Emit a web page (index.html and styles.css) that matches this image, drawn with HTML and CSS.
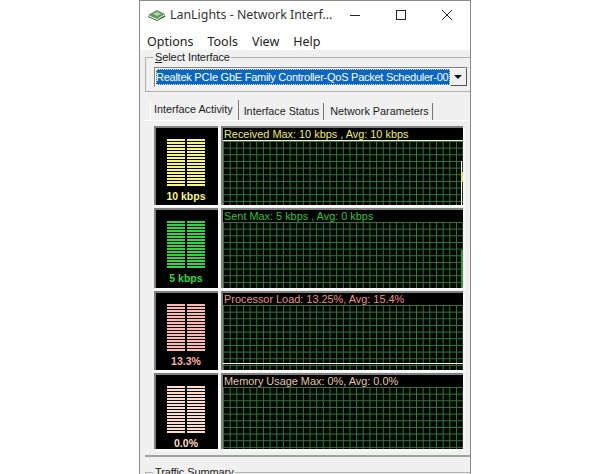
FILE: index.html
```html
<!DOCTYPE html>
<html lang="en">
<head>
<meta charset="utf-8">
<title>LanLights</title>
<link rel="stylesheet" href="styles.css">
</head>
<body>
<div class="window">
  <header class="titlebar">
    <svg class="app-icon" width="18" height="12" viewBox="0 0 18 12"><path d="M0 6 9 1l8 4-8 5z" fill="#5f9a5a"/><path d="M0 7l9 4 8-5v2l-8 4-9-4z" fill="#38663a"/><path d="M5 5l4-2 4 2-4 2z" fill="#b9d6b0"/></svg>
    <span class="title">LanLights - Network Interf...</span>
    <div class="controls">
      <svg width="12" height="12" viewBox="0 0 12 12"><path d="M1 6.5h10" stroke="#222" fill="none"/></svg>
      <svg width="12" height="12" viewBox="0 0 12 12"><rect x="1.5" y="1.5" width="9" height="9" stroke="#222" fill="none"/></svg>
      <svg width="12" height="12" viewBox="0 0 12 12"><path d="M1 1l10 10M11 1 1 11" stroke="#222" fill="none"/></svg>
    </div>
  </header>
  <nav class="menu"><span>Options</span><span>Tools</span><span>View</span><span>Help</span></nav>
  <main class="client">
    <fieldset class="group select-group">
      <legend><u>S</u>elect Interface</legend>
      <div class="combo">
        <span class="combo-text"><span class="selected">Realtek PCIe GbE Family Controller-QoS Packet Scheduler-00</span></span>
        <span class="combo-btn"></span>
      </div>
    </fieldset>
    <div class="tabs">
      <span class="tab active">Interface Activity</span>
      <span class="tab">Interface Status</span>
      <span class="tab">Network Parameters</span>
    </div>
    <section class="panel">
      <div class="row c-yellow">
        <div class="meter"><div class="bars"><i></i><i></i></div><b>10 kbps</b></div>
        <div class="graph"><div class="cap">Received Max: 10 kbps , Avg: 10 kbps</div><div class="plot"><span class="trace-y"></span></div></div>
      </div>
      <div class="row c-green">
        <div class="meter"><div class="bars"><i></i><i></i></div><b>5 kbps</b></div>
        <div class="graph"><div class="cap">Sent Max: 5 kbps , Avg: 0 kbps</div><div class="plot"><span class="trace-g"></span></div></div>
      </div>
      <div class="row c-red">
        <div class="meter"><div class="bars"><i></i><i></i></div><b>13.3%</b></div>
        <div class="graph"><div class="cap">Processor Load: 13.25%, Avg: 15.4%</div><div class="plot"><span class="line-w"></span></div></div>
      </div>
      <div class="row c-peach">
        <div class="meter"><div class="bars"><i></i><i></i></div><b>0.0%</b></div>
        <div class="graph"><div class="cap">Memory Usage Max: 0%, Avg: 0.0%</div><div class="plot"></div></div>
      </div>
    </section>
    <fieldset class="group traffic"><legend>Traffic Summary</legend></fieldset>
  </main>
</div>
</body>
</html>
```
FILE: styles.css
```css
html, body { margin: 0; padding: 0; background: #fff; height: 474px; overflow: hidden; }
body { font-family: "Liberation Sans", Arial, sans-serif; color: #111; }
.window {
  width: 332px; height: 474px; margin-left: 139px; box-sizing: border-box;
  border-left: 1px solid #8a8a8a; border-right: 1px solid #8a8a8a; border-top: 1px solid #8a8a8a;
  background: #fff; display: flex; flex-direction: column; overflow: hidden;
}
.titlebar { height: 27px; display: flex; align-items: center; padding-left: 8px; flex: none; }
.app-icon { flex: none; margin-right: 4px; }
.title { font-family: "Noto Sans", sans-serif; font-size: 12.4px; color: #333; white-space: nowrap; }
.controls { margin-left: auto; display: flex; gap: 34px; padding-right: 17px; }
.menu { height: 22px; box-sizing: border-box; padding: 4px 0 0 7px; display: flex; gap: 14px; align-items: center; flex: none; font-family: "Noto Sans", sans-serif; font-size: 12.5px; color: #222; }
.client { flex: 1; background: #f0f0f0; padding: 2px 0 0 5px; min-height: 0; overflow: hidden; }
.group { border: 1px solid #b0b0b0; margin: 0; padding: 0; min-width: 0; }
legend { font-size: 11px; letter-spacing: -0.1px; padding: 0 1px 0 2px; margin-left: 7px; line-height: 11px; color: #222; }
.select-group legend { margin-left: -1px; }
.select-group { height: 40px; width: 340px; box-sizing: border-box; padding: 4px 0 0 8px; }
.combo { display: flex; width: 314px; height: 20px; box-sizing: border-box; border: 1px solid; border-color: #808080 #eee #eee #808080; background: #fff; }
.combo-text { flex: 1; padding: 1px 0 0 1px; overflow: hidden; white-space: nowrap; min-width: 0; }
.selected { display: block; background: #0a66c2; color: #fff; font-size: 11px; letter-spacing: -0.25px; line-height: 16px; outline: 1px dotted #cfe0f0; outline-offset: -1px; }
.combo-btn { width: 17px; flex: none; background: #f0f0f0; border: 1px solid; border-color: #fff #555 #555 #fff; box-sizing: border-box; position: relative; }
.combo-btn::after { content: ""; position: absolute; left: 3px; top: 6px; border: 4px solid transparent; border-top: 4px solid #111; border-bottom: 0; }
.tabs { display: flex; align-items: flex-end; height: 22px; margin-top: 6px; padding-left: 5px; font-size: 10.8px; color: #222; }
.tab { padding: 0 4px 0 5px; height: 17px; line-height: 17px; border-right: 1px solid #777; white-space: nowrap; box-sizing: border-box; }
.tab:last-child { padding: 0 3px 0 6px; }
.tab.active { height: 20px; line-height: 18px; padding: 0 5px 0 3px; border-left: 1px solid #fff; }
.panel { width: 326px; padding: 5px 0 0 9px; box-sizing: border-box; height: 337px; border-top: 1px solid #fff; border-bottom: 2px solid #a0a0a0; display: grid; grid-template-rows: 79px 80px 79px 76px; row-gap: 3px; align-content: start; }
.row { display: flex; gap: 3px; min-height: 0; }
.meter { width: 64px; background: #000; border-top: 2px solid #808080; border-left: 2px solid #808080; box-shadow: 2px 2px 0 #fbfbfb; box-sizing: border-box; display: flex; flex-direction: column; align-items: center; padding: 11px 2px 0 0; overflow: hidden; }
.meter b { font-size: 10.5px; line-height: 13px; font-weight: bold; margin-top: 4px; color: var(--text); white-space: nowrap; }
.bars { display: flex; gap: 2px; height: 47px; flex: none; }
.bars i { display: block; width: 18px; height: 47px; background: repeating-linear-gradient(to bottom, var(--c) 0 2px, #000 2px 3px); }
.graph { width: 242px; background: #000; border-top: 2px solid #808080; border-left: 2px solid #808080; box-shadow: 2px 2px 0 #fbfbfb; box-sizing: border-box; display: flex; flex-direction: column; overflow: hidden; }
.cap { height: 12px; font-size: 10.9px; line-height: 12px; padding-left: 1px; color: var(--cap); white-space: nowrap; flex: none; }
.plot { flex: 1; position: relative; background-color: #030803;
  background-image: linear-gradient(to right, #37763c 1.3px, transparent 1.3px), linear-gradient(to bottom, #37763c 1.3px, transparent 1.3px);
  background-size: 6.67px 6.67px; }
.c-yellow { --c: #f6f47c; --text: #f8f888; --cap: #eeee70; }
.c-green { --c: #30d63c; --text: #35d83f; --cap: #2cc436; }
.c-red { --c: #ffb6ac; --text: #ffb0a8; --cap: #f09088; }
.c-peach { --c: #ffdcc8; --text: #ffdcc8; --cap: #e8c8a8; }
.c-yellow .plot { border-top: 1px solid #f4f4c8; }
.trace-y { position: absolute; right: 1px; top: 20px; bottom: 0; width: 1px; background: #f8f8d0; }
.trace-y::after { content: ""; position: absolute; left: 0; top: 11px; width: 3px; height: 10px; background: #e8e840; }
.trace-g { position: absolute; right: 0; top: 28px; bottom: 0; width: 2px; background: #2fa035; }
.line-w { position: absolute; left: 0; right: 0; top: 58px; height: 1px; background: #fff; }
.traffic { width: 340px; height: 40px; margin-top: 10px; }
```
